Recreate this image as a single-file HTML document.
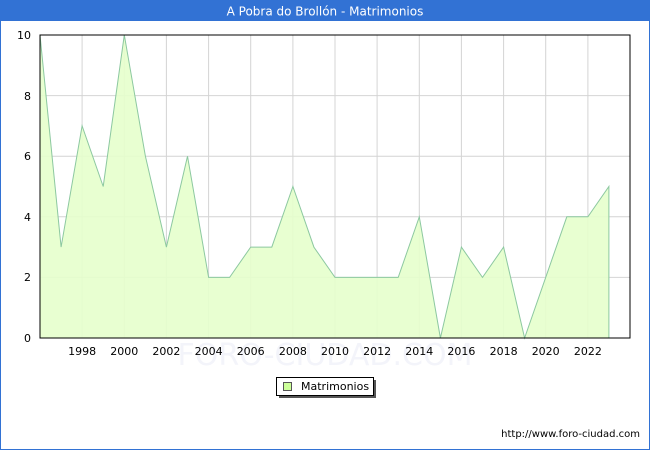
<!DOCTYPE html>
<html><head><meta charset="utf-8"><style>
body{margin:0;width:650px;height:450px;overflow:hidden;background:#fff;font-family:"DejaVu Sans","Liberation Sans",sans-serif;}
</style></head><body>
<svg width="650" height="450" xmlns="http://www.w3.org/2000/svg" font-family="DejaVu Sans, Liberation Sans, sans-serif">
<rect x="0" y="0" width="650" height="450" fill="#fff"/>
<rect x="0.5" y="0.5" width="649" height="449" fill="none" stroke="#3272d4"/>
<rect x="0" y="0" width="650" height="21" fill="#3272d4"/>
<text x="325" y="15.5" font-size="12" fill="#fff" text-anchor="middle">A Pobra do Brollón - Matrimonios</text>
<g stroke="#d4d4d4" stroke-width="1">
<line x1="40" y1="95.6" x2="630" y2="95.6"/><line x1="40" y1="156.2" x2="630" y2="156.2"/><line x1="40" y1="216.8" x2="630" y2="216.8"/><line x1="40" y1="277.4" x2="630" y2="277.4"/>
<line x1="82.1" y1="35" x2="82.1" y2="338"/><line x1="124.3" y1="35" x2="124.3" y2="338"/><line x1="166.4" y1="35" x2="166.4" y2="338"/><line x1="208.6" y1="35" x2="208.6" y2="338"/><line x1="250.7" y1="35" x2="250.7" y2="338"/><line x1="292.9" y1="35" x2="292.9" y2="338"/><line x1="335" y1="35" x2="335" y2="338"/><line x1="377.1" y1="35" x2="377.1" y2="338"/><line x1="419.3" y1="35" x2="419.3" y2="338"/><line x1="461.4" y1="35" x2="461.4" y2="338"/><line x1="503.6" y1="35" x2="503.6" y2="338"/><line x1="545.7" y1="35" x2="545.7" y2="338"/><line x1="587.9" y1="35" x2="587.9" y2="338"/>
</g>
<text x="325" y="365" font-size="30" fill="#f3f4fa" text-anchor="middle">FORO-CIUDAD.COM</text>
<polygon fill="#e6ffcc" fill-opacity="0.9" stroke="#8cc8a0" stroke-width="1" points="40,338 40,35 61.1,247.1 82.1,125.9 103.2,186.5 124.3,35 145.4,156.2 166.4,247.1 187.5,156.2 208.6,277.4 229.6,277.4 250.7,247.1 271.8,247.1 292.9,186.5 313.9,247.1 335,277.4 356.1,277.4 377.1,277.4 398.2,277.4 419.3,216.8 440.4,338 461.4,247.1 482.5,277.4 503.6,247.1 524.6,338 545.7,277.4 566.8,216.8 587.9,216.8 608.9,186.5 608.9,338"/>
<rect x="40" y="35" width="590" height="303" fill="none" stroke="#000" stroke-width="1"/>
<g font-size="11" fill="#000" text-anchor="end">
<text x="31" y="39">10</text><text x="31" y="100">8</text><text x="31" y="160">6</text><text x="31" y="221">4</text><text x="31" y="281">2</text><text x="31" y="342">0</text>
</g>
<g font-size="11" fill="#000" text-anchor="middle">
<text x="82.1" y="355">1998</text><text x="124.3" y="355">2000</text><text x="166.4" y="355">2002</text><text x="208.6" y="355">2004</text><text x="250.7" y="355">2006</text><text x="292.9" y="355">2008</text><text x="335" y="355">2010</text><text x="377.1" y="355">2012</text><text x="419.3" y="355">2014</text><text x="461.4" y="355">2016</text><text x="503.6" y="355">2018</text><text x="545.7" y="355">2020</text><text x="587.9" y="355">2022</text>
</g>
<rect x="279" y="380" width="97" height="18" fill="#555"/>
<rect x="276.5" y="377.5" width="97" height="18" fill="#fff" stroke="#000"/>
<rect x="283.5" y="382.5" width="8" height="8" fill="#ccff99" stroke="#555"/>
<text x="301" y="390" font-size="11" fill="#000">Matrimonios</text>
<text x="640" y="437" font-size="10" fill="#000" text-anchor="end">http://www.foro-ciudad.com</text>
</svg>
</body></html>
